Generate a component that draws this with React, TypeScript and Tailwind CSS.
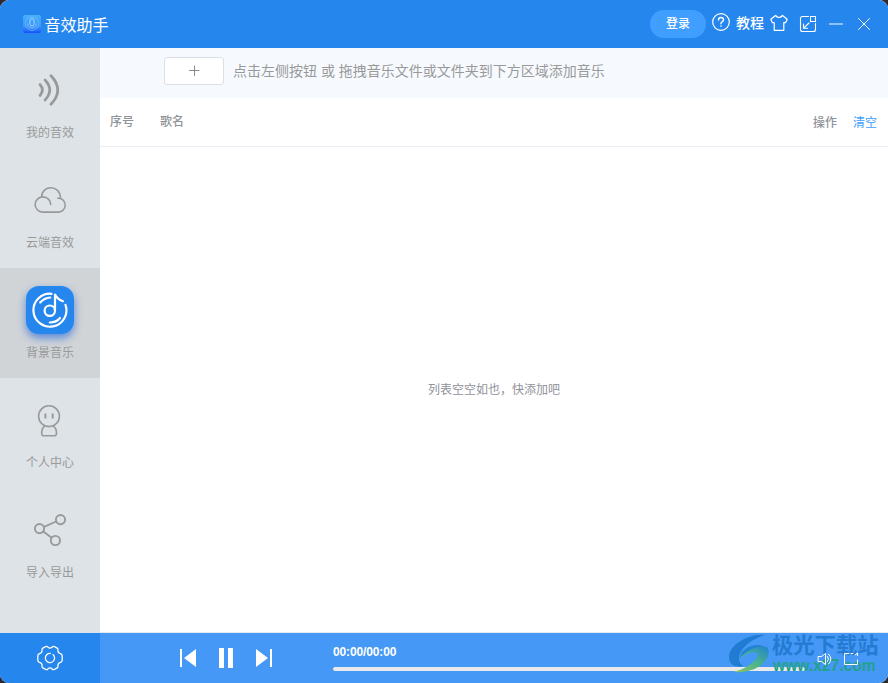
import React from 'react';

const stroke = { fill: 'none', stroke: 'currentColor', strokeLinecap: 'round', strokeLinejoin: 'round' } as const;

const SoundIcon = () => (
  <svg width="48" height="48" viewBox="0 0 48 48" {...stroke} strokeWidth="2.7">
    <path d="M14 18.500Q18.800 24 14 29.500M19 14Q28.500 24 19 34M25 9.800Q38.500 24 25 38.300" />
  </svg>
);

const CloudIcon = () => (
  <svg width="48" height="48" viewBox="0 0 48 48" {...stroke} strokeWidth="1.600">
    <path d="M24.700 28.500A7.800 7.600 0 1 0 16.700 36.100H32.600A7 7 0 0 0 39.200 29.500C39.200 25 36 21.800 31.800 22.300M15.600 20.600C16.300 8.800 33.500 8.400 34.500 21.500" />
  </svg>
);

const MusicIcon = () => (
  <div className="h-12 w-12 rounded-[13px] bg-[#2587ee] text-white shadow-[0_4px_8px_rgba(37,105,220,0.7)]">
    <svg width="48" height="48" viewBox="0 0 48 48" {...stroke} strokeWidth="2.200">
      <path d="M25.500 7.800A16.500 16.500 0 1 0 39.500 18.800" />
      <circle cx="23.800" cy="24.700" r="5.200" />
      <path d="M29 24V8.500Q32 14 37 15.200M14.200 16.500Q18.200 12 24.200 11.500M23.800 36.500Q30.500 36.500 34 32" />
    </svg>
  </div>
);

const PersonIcon = () => (
  <svg width="48" height="48" viewBox="0 0 48 48" {...stroke} strokeWidth="1.600">
    <circle cx="23" cy="20.200" r="10.400" />
    <path d="M19.400 17.500V22.500M26.700 17.500V22.500" strokeWidth="2" strokeLinecap="butt" />
    <path d="M18.500 30.500Q15.700 32 15.700 37.500Q15.700 39.800 18 39.800H28Q30.500 39.800 30.500 37.500Q30.500 32 27.500 30.500" />
  </svg>
);

const ShareIcon = () => (
  <svg width="48" height="48" viewBox="0 0 48 48" {...stroke} strokeWidth="1.900">
    <circle cx="13.500" cy="22.600" r="4.600" /><circle cx="34.500" cy="13.600" r="4.600" /><circle cx="29.400" cy="34.500" r="4.600" />
    <path d="M18 20.800L30.200 15.500M17.300 25.500L25.700 31.700" />
  </svg>
);

const menu = [
  { label: '我的音效', icon: <SoundIcon /> },
  { label: '云端音效', icon: <CloudIcon /> },
  { label: '背景音乐', icon: <MusicIcon />, active: true },
  { label: '个人中心', icon: <PersonIcon /> },
  { label: '导入导出', icon: <ShareIcon /> },
];

function Header() {
  return (
    <header className="flex h-12 shrink-0 items-center bg-[#2586ed] pl-[23px] text-white">
      <svg width="18" height="18" viewBox="0 0 18 18" fill="none">
        <defs><linearGradient id="logo" x2="0" y2="1"><stop stopColor="#48b0ff" /><stop offset=".65" stopColor="#3995fb" /><stop offset="1" stopColor="#1551ff" /></linearGradient></defs>
        <rect width="18" height="18" rx="2" fill="url(#logo)" />
        <circle cx="9" cy="8.500" r="6.800" stroke="#69b9f8" strokeWidth=".8" />
        <rect x="6.900" y="3.500" width="4.200" height="7.500" rx="2.100" stroke="#a1d4ff" />
        <path d="M4.500 8.500Q5 13 9 13T13.500 8.500" stroke="#7cc2ff" />
      </svg>
      <h1 className="mb-px ml-[3.500px] text-[16px] leading-6">音效助手</h1>
      <div className="ml-auto flex h-12 items-center">
        <button className="h-7 w-14 rounded-full bg-[#409eff] pb-[2px] text-[12px] font-medium leading-[26px]">登录</button>
        <svg className="mb-1 ml-[5px]" width="20" height="20" viewBox="0 0 20 20" {...stroke} strokeWidth="1.200">
          <circle cx="10" cy="10" r="8.300" /><path d="M7.500 8Q7.500 5.500 10 5.500T12.500 8Q12.500 9.200 10.700 10.100Q10 10.600 10 11.700M10 14V14.200" strokeWidth="1.400" />
        </svg>
        <span className="mb-[5px] ml-[5px] text-[14px] font-medium leading-5">教程</span>
        <svg className="mb-[3px] ml-[5px]" width="20" height="20" viewBox="0 0 20 20" {...stroke} strokeWidth="1.200">
          <path d="M6.500 2.500Q10 6.500 13.500 2.500L18.200 6.200L16.700 9.600H14.800V17.300H5.200V9.600H3.300L1.800 6.200Z" />
        </svg>
        <svg className="ml-[10px]" width="18" height="18" viewBox="0 0 18 18" {...stroke} strokeWidth="1.100">
          <path d="M9.500 1.500H3.500Q1.500 1.500 1.500 3.500V14.500Q1.500 16.500 3.500 16.500H14.500Q16.500 16.500 16.500 14.500V8.500M11.500 1.500H16.500V6.500H11.500ZM10 8L4.500 13.200M4.500 9V13.200H8.500" />
        </svg>
        <svg className="ml-3" width="14" height="14" viewBox="0 0 14 14" {...stroke} strokeWidth="1.500" opacity=".65"><path d="M.5 7H13.500" /></svg>
        <svg className="ml-[14px] mr-[17px]" width="14" height="14" viewBox="0 0 14 14" {...stroke} strokeWidth="1"><path d="M1.500 1.500L12.500 12.500M12.500 1.500L1.500 12.500" /></svg>
      </div>
    </header>
  );
}

function Player() {
  return (
    <footer className="flex h-[50px] shrink-0 bg-[#4598f5] text-white">
      <div className="flex w-[100px] items-center justify-center bg-[#2586ed]">
        <svg width="28" height="28" viewBox="0 0 28 28" {...stroke} strokeWidth="1.300">
          <path d="M9.600 2.600Q11.200 1.900 12 3.200Q14 5 16 3.200Q16.800 1.900 18.400 2.600L21.600 4.400Q22.300 5 21.900 6.400Q22 9.100 24.500 9.600Q26.100 10.200 26.200 11.800V16.200Q26.100 17.800 24.500 18.400Q22 18.900 21.900 21.600Q22.300 23 21.600 23.600L18.400 25.400Q16.800 26.100 16 24.800Q14 23 12 24.800Q11.200 26.100 9.600 25.400L6.400 23.600Q5.700 23 6.100 21.600Q6 18.900 3.500 18.400Q1.900 17.800 1.800 16.200V11.800Q1.900 10.200 3.500 9.600Q6 9.100 6.100 6.400Q5.700 5 6.400 4.400Z" />
          <path d="M18.400 12.800A4.600 4.600 0 1 1 14.300 9.400M17 10.600A4.600 4.600 0 0 1 18.400 12.800" />
        </svg>
      </div>
      <svg className="ml-20 mt-[15px]" width="93" height="20" viewBox="0 0 93 20" fill="currentColor">
        <path d="M0 1H2V19H0ZM16 1V19L4 10ZM39 0H44V20H39ZM48 0H53V20H48ZM76 1V19L88 10ZM90 1H92V19H90Z" />
      </svg>
      <div className="ml-[60px] flex w-[472px] flex-col">
        <span className="mt-[11px] font-['Liberation_Sans',sans-serif] text-[12px] font-bold leading-4 tracking-[-0.13px]">00:00/00:00</span>
        <div className="mt-[7px] h-1 rounded-full bg-[#e9e9e9]" />
      </div>
      <svg className="relative z-10 ml-3 mt-[18px]" width="44" height="16" viewBox="0 0 44 16" {...stroke} strokeWidth="1">
        <path d="M1.500 5.500H4.500L8.500 2.500V13.500L4.500 10.500H1.500ZM10.500 5.500Q12.500 8 10.500 10.500M11.500 3Q16.500 8 11.500 13M32 2.500H27.500V13.500H40.500V9M34 2.500H36M38 4L40.500 2V4.500" />
      </svg>
    </footer>
  );
}

function Watermark() {
  return (
    <div className="pointer-events-none absolute left-[728px] top-[632px] flex h-[46px] w-[152px]">
      <svg width="44" height="44" viewBox="0 0 44 44">
        <defs><linearGradient id="swoosh" x1="0" y1="1" x2="1" y2="0"><stop stopColor="#8fc565" /><stop offset=".5" stopColor="#4bb58a" /><stop offset="1" stopColor="#2382cf" /></linearGradient></defs>
        <path d="M37 3C21 1 1 13 1 25C1 32 6 36 15 34C5 27 14 10 37 3Z" fill="#207bd2" />
        <path d="M13 26C14 18 26 13 39 15C46 24 32 42 5 40C19 37 30 28 30 22C26 18 18 21 13 26Z" fill="url(#swoosh)" />
        <path d="M12 26C14 15 27 10 38 15C28 14 18 19 12 26Z" fill="#2283d2" />
      </svg>
      <div className="flex flex-col whitespace-nowrap">
        <span className="text-[21.300px] font-bold leading-6 text-[#237bd3]">极光下载站</span>
        <span className="mt-px pl-px font-['Liberation_Sans',sans-serif] text-[15.600px] font-bold leading-[18px] text-[#24a18b]">www.x27.com</span>
      </div>
    </div>
  );
}

export default function App() {
  return (
    <div className="h-[683px] w-[888px] bg-[#302728] font-['Noto_Sans_CJK_SC',sans-serif]">
      <div className="relative flex h-full flex-col overflow-hidden rounded-[9px] bg-white">
        <Header />
        <div className="flex min-h-0 flex-1">
          <nav className="w-[100px] shrink-0 bg-[#dee3e7] text-[#999]">
            {menu.map(({ label, icon, active }) => (
              <div key={label} className={`flex h-[110px] flex-col items-center pt-[18px] ${active ? 'bg-[#d1d4d7]' : ''}`}>
                {icon}
                <span className="mt-[9px] text-[12px] leading-[18px]">{label}</span>
              </div>
            ))}
          </nav>
          <main className="flex flex-1 flex-col border-b border-[#e4e9f0]">
            <div className="flex h-[50px] shrink-0 items-start bg-[#f6faff] pl-16 pt-[9px]">
              <button className="flex h-7 w-[60px] items-center justify-center rounded-[3px] border border-[#dcdfe6] bg-white text-[#888]">
                <svg className="mr-px" width="12" height="12" viewBox="0 0 12 12" {...stroke} strokeWidth="1"><path d="M1.500 5.500H11M6.500 1V10.500" /></svg>
              </button>
              <p className="ml-[9px] mt-[3px] whitespace-nowrap text-[14px] leading-5 text-[#999] [word-spacing:0.8px]">点击左侧按钮 或 拖拽音乐文件或文件夹到下方区域添加音乐</p>
            </div>
            <div className="flex h-[49px] shrink-0 items-center border-b border-[#ebeef5] px-[10px] text-[12px] font-medium leading-5 text-[#909399]">
              <span className="mb-[3px] w-[50px]">序号</span>
              <span className="mb-[3px]">歌名</span>
              <span className="mb-px ml-auto">操作</span>
              <button className="mb-px ml-4 mr-px font-normal text-[#409eff]">清空</button>
            </div>
            <div className="flex flex-1 items-center justify-center pb-[2px] text-[12px] text-[#909399]">列表空空如也，快添加吧</div>
          </main>
        </div>
        <Player />
        <Watermark />
      </div>
    </div>
  );
}
